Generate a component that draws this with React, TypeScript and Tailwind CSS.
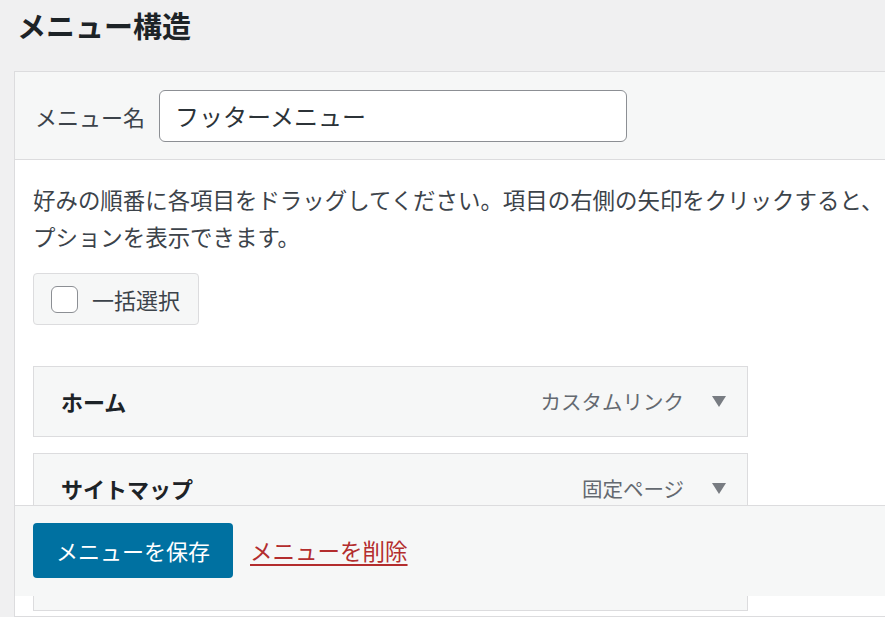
import { useState } from "react";

interface MenuItem {
  title: string;
  type: string;
}

const items: MenuItem[] = [
  { title: "ホーム", type: "カスタムリンク" },
  { title: "サイトマップ", type: "固定ページ" },
  { title: "お問い合わせ", type: "固定ページ" },
];

export default function App() {
  const [checked, setChecked] = useState(false);
  const [name, setName] = useState("フッターメニュー");

  return (
    <div className="w-[885px] h-[617px] overflow-hidden bg-[#f0f0f1] text-[#3c434a] font-['Noto_Sans_CJK_JP','Noto_Sans',sans-serif]">
      {/* 見出し */}
      <h2 className="pl-[17px] pt-[7px] h-[71px] text-[29px] leading-[36px] font-bold text-[#1d2327]">
        メニュー構造
      </h2>

      {/* パネル */}
      <div className="relative ml-[14px] w-[940px] h-[546px] border border-[#dcdcde] bg-white">
        <div className="flex items-center h-[88px] pl-[20px] bg-[#f6f7f7] border-b border-[#dcdcde]">
          <label className="text-[22px] leading-none mr-[14px]">メニュー名</label>
          <input
            value={name}
            onChange={(e) => setName(e.target.value)}
            className="w-[468px] h-[52px] px-[15px] rounded-[6px] border border-[#8c8f94] bg-white text-[24px] text-[#2c3338] outline-none"
          />
        </div>

        <div className="pl-[18px] pt-[21px]">
          <p className="w-[884px] text-[22.45px] leading-[37px]">
            好みの順番に各項目をドラッグしてください。項目の右側の矢印をクリックすると、オプションを表示できます。
          </p>

          <label className="mt-[18px] flex items-center w-[166px] h-[52px] pl-[17px] gap-[14px] rounded-[4px] border border-[#dcdcde] bg-[#f6f7f7] cursor-pointer">
            <input
              type="checkbox"
              checked={checked}
              onChange={() => setChecked(!checked)}
              className="appearance-none w-[27px] h-[27px] rounded-[6px] border border-[#8c8f94] bg-white"
            />
            <span className="text-[22px] leading-none">一括選択</span>
          </label>

          <ul className="mt-[41px] flex flex-col gap-[16px]">
            {items.map((item) => (
              <li
                key={item.title}
                className="flex items-center w-[715px] h-[71px] pl-[27px] pr-[21px] border border-[#dcdcde] bg-[#f6f7f7]"
              >
                <span className="text-[22px] font-bold text-[#1d2327]">{item.title}</span>
                <span className="ml-auto text-[20.5px] text-[#646970]">{item.type}</span>
                <svg width="14" height="11" viewBox="0 0 14 11" className="ml-[28px]">
                  <polygon points="0,0 14,0 7,11" fill="#787c82" />
                </svg>
              </li>
            ))}
          </ul>
        </div>

        {/* 固定フッター */}
        <div className="absolute left-0 right-0 top-[433px] h-[91px] flex items-start pt-[17px] pl-[18px] gap-[17px] bg-[#f6f7f7] border-t border-[#dcdcde]">
          <button className="h-[55px] px-[23px] rounded-[4px] bg-[#0071a1] text-white text-[22px]">
            メニューを保存
          </button>
          <a href="#" className="mt-[11px] text-[22.5px] text-[#b32d2e] underline underline-offset-[4px]">
            メニューを削除
          </a>
        </div>
      </div>
    </div>
  );
}
